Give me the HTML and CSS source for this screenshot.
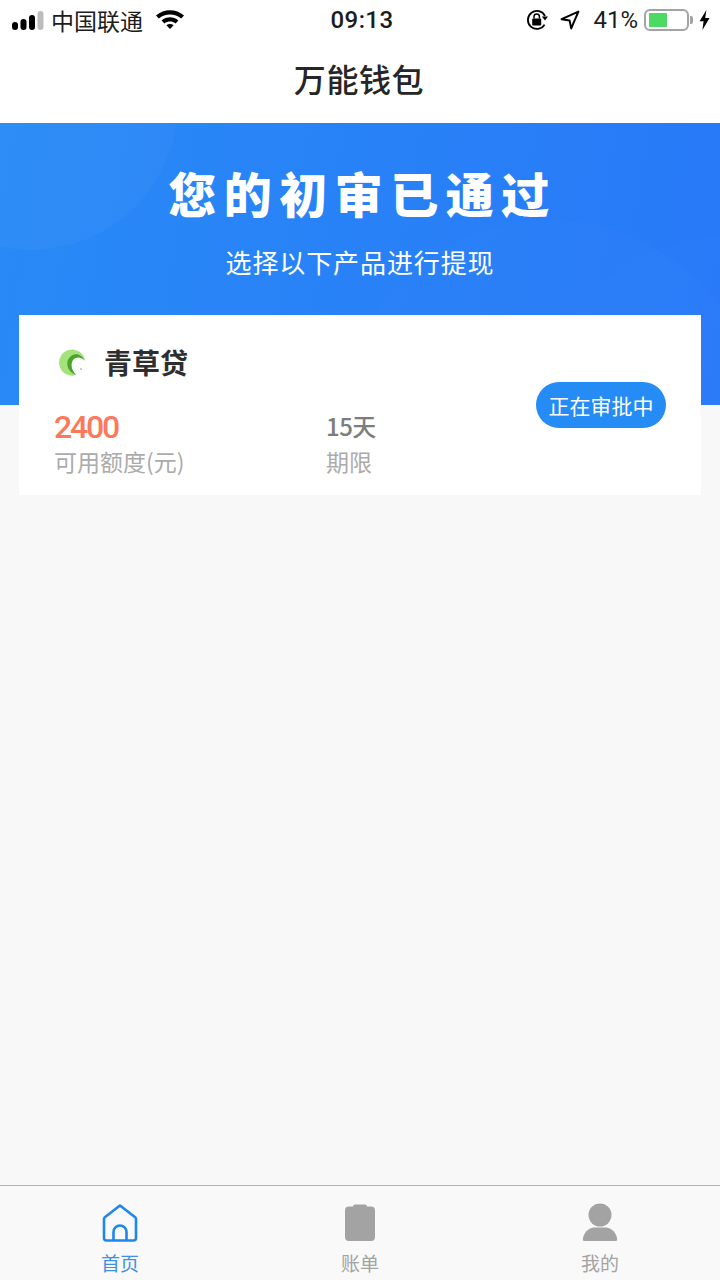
FILE: index.html
```html
<!DOCTYPE html>
<html lang="zh-CN">
<head>
    <meta charset="UTF-8">
    <meta name="viewport" content="width=device-width, initial-scale=1.0">
    <title>万能钱包</title>
    <link rel="stylesheet" href="styles.css">
</head>
<body>
<div class="page">

    <div class="status-bar">
        <div class="status-left">
            <svg class="signal" width="32" height="20" viewBox="0 0 32 20">
                <rect x="0" y="11" width="6" height="8" rx="3" fill="#000"/>
                <rect x="8.5" y="8" width="6" height="11" rx="3" fill="#000"/>
                <rect x="17" y="4" width="6" height="15" rx="3" fill="#000"/>
                <rect x="25.5" y="0" width="6" height="19" rx="3" fill="#bdbdbd"/>
            </svg>
            <span class="carrier">中国联通</span>
            <svg class="wifi" width="30" height="20" viewBox="0 0 30 20">
                <path d="M1 6.5C9 -0.6 21 -0.6 29 6.5L26.2 9.6C20 4.2 10 4.2 3.8 9.6Z" fill="#000"/>
                <path d="M6.6 11.4C11.6 7.2 18.4 7.2 23.4 11.4L20.6 14.4C17.2 11.8 12.8 11.8 9.4 14.4Z" fill="#000"/>
                <path d="M11.4 16.2C13.6 14.7 16.4 14.7 18.6 16.2L15 20Z" fill="#000"/>
            </svg>
        </div>
        <div class="status-time">09:13</div>
        <div class="status-right">
            <svg class="lock" width="23" height="22" viewBox="0 0 23 22">
                <path d="M18.6 15.6A9 9 0 1 1 19 7" fill="none" stroke="#000" stroke-width="1.8"/>
                <path d="M15.8 7.6H22L19 11.6Z" fill="#000"/>
                <rect x="6.2" y="9.4" width="9" height="7" rx="1" fill="#000"/>
                <path d="M8 9.6V7.6a2.7 2.7 0 0 1 5.4 0V9.6" fill="none" stroke="#000" stroke-width="1.5"/>
            </svg>
            <svg class="arrow" width="20" height="20" viewBox="0 0 20 20">
                <path d="M18.4 1.6L1.6 9.2L9.6 10.6L11.2 18.4Z" fill="none" stroke="#000" stroke-width="2" stroke-linejoin="round"/>
            </svg>
            <span class="percent">41%</span>
            <div class="battery">
                <div class="battery-body"><div class="battery-level"></div></div>
                <div class="battery-cap"></div>
            </div>
            <svg class="bolt" width="11" height="20" viewBox="0 0 11 20">
                <path d="M7.4 0L0.6 11.2H4.6L3.4 20L10.6 8H6.2Z" fill="#000"/>
            </svg>
        </div>
    </div>

    <div class="nav-bar">万能钱包</div>

    <div class="hero">
        <div class="hero-circle hero-circle-a"></div>
        <div class="hero-circle hero-circle-b"></div>
        <div class="hero-circle hero-circle-c"></div>
        <h1 class="hero-title">您的初审已通过</h1>
        <p class="hero-sub">选择以下产品进行提现</p>
    </div>

    <div class="content">
        <div class="card">
            <div class="card-info">
                <div class="product">
                    <svg class="product-logo" width="32" height="30" viewBox="0 0 32 30">
                        <path d="M28 14A13 13 0 1 0 19 28C13 24 12 12 20 9.500C23 8.500 26 10.500 28 14Z" fill="#a5e27c"/>
                        <path d="M28 14C24 5 14 5 10.500 14C9.500 20 12 25 19 28C14 22 13.500 17 16 13C19 9 25 10 28 14Z" fill="#46a626"/>
                        <circle cx="24" cy="22" r="0.8" fill="#7c9a70"/>
                    </svg>
                    <span class="product-name">青草贷</span>
                </div>
                <div class="stats">
                    <div class="stat">
                        <div class="amount">2400</div>
                        <div class="stat-label">可用额度(元)</div>
                    </div>
                    <div class="stat">
                        <div class="term">15天</div>
                        <div class="stat-label">期限</div>
                    </div>
                </div>
            </div>
            <div class="status-btn">正在审批中</div>
        </div>
    </div>

    <div class="tab-bar">
        <div class="tab tab-active">
            <svg width="36" height="40" viewBox="0 0 36 40">
                <path d="M18 2.500L33.500 14.500A2 2 0 0 1 34 16V35A2.500 2.500 0 0 1 31.500 37.500H4.500A2.500 2.500 0 0 1 2 35V16A2 2 0 0 1 2.500 14.500Z" fill="none" stroke="#1f86f0" stroke-width="2.600" stroke-linejoin="round"/>
                <path d="M11.500 37V29A6.500 6.500 0 0 1 24.500 29V37" fill="none" stroke="#1f86f0" stroke-width="2.600"/>
            </svg>
            <span class="tab-label">首页</span>
        </div>
        <div class="tab">
            <svg width="36" height="40" viewBox="0 0 36 40">
                <path d="M11 3.500Q11 1.500 13 1.500H23Q25 1.500 25 3.500H29Q33 3.500 33 7.500V34Q33 38 29 38H7Q3 38 3 34V7.500Q3 3.500 7 3.500Z" fill="#a3a3a3"/>
            </svg>
            <span class="tab-label">账单</span>
        </div>
        <div class="tab">
            <svg width="36" height="40" viewBox="0 0 36 40">
                <circle cx="18" cy="12" r="11.500" fill="#a3a3a3"/>
                <path d="M2 38Q0.500 38 1 35C2.500 28 8 24.500 12 24.500H24C28 24.500 33.500 28 35 35Q35.500 38 34 38Z" fill="#a3a3a3"/>
            </svg>
            <span class="tab-label">我的</span>
        </div>
    </div>

</div>
</body>
</html>
```

FILE: styles.css
```css
* {
    box-sizing: border-box;
}
body {
    margin: 0;
    font-family: "Noto Sans CJK SC", Roboto, sans-serif;
}
.page {
    width: 720px;
    height: 1280px;
    display: flex;
    flex-direction: column;
    overflow: hidden;
    background-color: #f8f8f8;
}

/* status bar */
.status-bar {
    height: 40px;
    flex-shrink: 0;
    display: grid;
    grid-template-columns: 1fr auto 1fr;
    align-items: center;
    background-color: #fff;
    color: #000;
}
.status-left {
    display: flex;
    align-items: center;
    padding-left: 12px;
}
.signal {
    margin-top: 1px;
}
.carrier {
    font-size: 23px;
    line-height: 40px;
    margin-left: 7px;
    color: #1c1c1c;
}
.wifi {
    margin-left: 12px;
    margin-bottom: 3px;
}
.status-time {
    padding-left: 4px;
    font-family: Roboto, sans-serif;
    font-size: 24px;
    line-height: 40px;
    font-weight: 500;
    letter-spacing: 0.4px;
    color: #1c1c1c;
}
.status-right {
    display: flex;
    align-items: center;
    justify-content: flex-end;
    padding-right: 10px;
}
.arrow {
    margin-left: 11px;
}
.percent {
    font-family: Roboto, sans-serif;
    font-size: 24px;
    margin-left: 13px;
    color: #1c1c1c;
}
.battery {
    display: flex;
    align-items: center;
    margin-left: 6px;
}
.battery-body {
    width: 45px;
    height: 22px;
    padding: 2px 3px;
    border: 2px solid #a3a3a3;
    border-radius: 6px;
}
.battery-level {
    width: 18px;
    height: 100%;
    background-color: #4cd964;
    border-radius: 1px;
}
.battery-cap {
    width: 3px;
    height: 8px;
    margin-left: 1px;
    background-color: #a3a3a3;
    border-radius: 0 2px 2px 0;
}
.bolt {
    margin-left: 6px;
}

/* nav */
.nav-bar {
    height: 83px;
    flex-shrink: 0;
    display: flex;
    align-items: center;
    justify-content: center;
    padding: 0 2px 7px 0;
    background-color: #fff;
    color: #262626;
    font-size: 32px;
    font-weight: 500;
    letter-spacing: 0.6px;
}

/* blue header */
.hero {
    position: relative;
    height: 282px;
    flex-shrink: 0;
    overflow: hidden;
    padding-top: 39px;
    text-align: center;
    color: #fff;
    background: linear-gradient(100deg, #288af6 0%, #2879f8 100%);
}
.hero-circle {
    position: absolute;
    border-radius: 50%;
}
.hero-circle-a {
    width: 290px;
    height: 290px;
    left: -113px;
    top: -163px;
    background-color: rgba(255, 255, 255, 0.03);
}
.hero-circle-b {
    width: 420px;
    height: 420px;
    left: 340px;
    top: 97px;
    background-color: rgba(255, 255, 255, 0.012);
}
.hero-circle-c {
    width: 400px;
    height: 400px;
    left: 530px;
    top: 113px;
    background-color: rgba(255, 255, 255, 0.008);
}
.hero-title {
    margin: 0;
    padding-left: 5px;
    font-size: 48px;
    font-weight: 900;
    line-height: 60px;
    letter-spacing: 7.5px;
}
.hero-sub {
    margin: 21px 0 0;
    font-size: 26px;
    line-height: 38px;
    letter-spacing: 0.9px;
}

/* product card */
.content {
    flex: 1;
    padding: 0 19px;
}
.card {
    position: relative;
    height: 180px;
    margin-top: -90px;
    display: flex;
    align-items: center;
    justify-content: space-between;
    padding: 0 35px;
    background-color: #fff;
}
.card-info {
    flex: 1;
    align-self: flex-start;
    padding-top: 27px;
}
.product {
    display: flex;
    align-items: center;
    margin-left: 3px;
}
.product-name {
    margin-left: 15px;
    color: #2e2e2e;
    font-size: 28px;
    font-weight: 700;
}
.stats {
    display: grid;
    grid-template-columns: 272px auto;
    margin-top: 24px;
}
.amount {
    padding-top: 2px;
    color: #fc7a5b;
    font-family: Roboto, sans-serif;
    font-size: 32px;
    font-weight: 500;
    line-height: 38px;
    letter-spacing: -2.2px;
}
.term {
    color: #7d7d7d;
    font-size: 24px;
    font-weight: 500;
    line-height: 40px;
    letter-spacing: -0.5px;
}
.stat-label {
    color: #ababab;
    font-size: 23px;
    line-height: 30px;
}
.status-btn {
    width: 130px;
    height: 46px;
    flex-shrink: 0;
    display: flex;
    align-items: center;
    justify-content: center;
    background-color: #258bf5;
    border-radius: 23px;
    color: #fff;
    font-size: 21px;
}

/* bottom tabs */
.tab-bar {
    height: 95px;
    flex-shrink: 0;
    display: flex;
    padding-top: 17px;
    background-color: #f9f9f9;
    border-top: 1px solid #b4b4b4;
}
.tab {
    flex: 1;
    display: flex;
    flex-direction: column;
    align-items: center;
    color: #a3a3a3;
}
.tab-label {
    margin-top: 7px;
    font-size: 19px;
    line-height: 26px;
}
.tab-active {
    color: #3d8fe8;
}
```
